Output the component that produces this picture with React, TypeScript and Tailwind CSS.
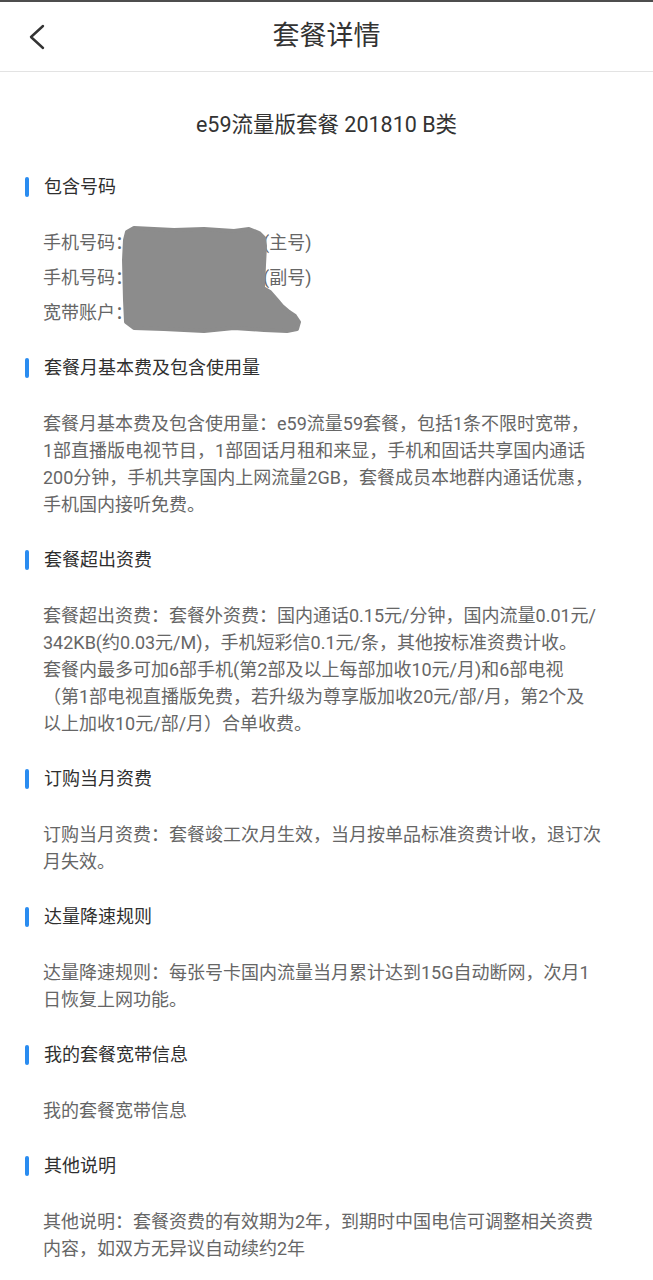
import React from "react";

const sections: { title: string; lines: string[] }[] = [
  {
    title: "套餐月基本费及包含使用量",
    lines: [
      "套餐月基本费及包含使用量：e59流量59套餐，包括1条不限时宽带，",
      "1部直播版电视节目，1部固话月租和来显，手机和固话共享国内通话",
      "200分钟，手机共享国内上网流量2GB，套餐成员本地群内通话优惠，",
      "手机国内接听免费。",
    ],
  },
  {
    title: "套餐超出资费",
    lines: [
      "套餐超出资费：套餐外资费：国内通话0.15元/分钟，国内流量0.01元/",
      "342KB(约0.03元/M)，手机短彩信0.1元/条，其他按标准资费计收。",
      "套餐内最多可加6部手机(第2部及以上每部加收10元/月)和6部电视",
      "（第1部电视直播版免费，若升级为尊享版加收20元/部/月，第2个及",
      "以上加收10元/部/月）合单收费。",
    ],
  },
  {
    title: "订购当月资费",
    lines: [
      "订购当月资费：套餐竣工次月生效，当月按单品标准资费计收，退订次",
      "月失效。",
    ],
  },
  {
    title: "达量降速规则",
    lines: [
      "达量降速规则：每张号卡国内流量当月累计达到15G自动断网，次月1",
      "日恢复上网功能。",
    ],
  },
  {
    title: "我的套餐宽带信息",
    lines: ["我的套餐宽带信息"],
  },
  {
    title: "其他说明",
    lines: [
      "其他说明：套餐资费的有效期为2年，到期时中国电信可调整相关资费",
      "内容，如双方无异议自动续约2年",
    ],
  },
];

function SectionTitle({ text }: { text: string }) {
  return (
    <div className="flex items-center h-[27px]">
      <span className="ml-[25px] w-[4px] h-[20px] rounded-full bg-[#2a8cf0]" />
      <span className="ml-[15px] text-[18px] leading-[27px] text-[#2f2f2f]">{text}</span>
    </div>
  );
}

export default function App() {
  return (
    <div
      className="w-[653px] min-h-[1280px] bg-white"
      style={{ fontFamily: 'Roboto, "Noto Sans CJK SC", sans-serif' }}
    >
      {/* Header */}
      <div className="border-t-2 border-[#4d4d4d]">
        <div className="relative h-[70px] flex items-center justify-center border-b border-[#e3e3e3]">
          <svg
            className="absolute left-[26px] top-[20px]"
            width="22"
            height="32"
            viewBox="0 0 22 32"
            fill="none"
          >
            <path d="M17 4 L5 15 L17 26" stroke="#333" strokeWidth="2.4" strokeLinecap="round" strokeLinejoin="round" />
          </svg>
          <span className="text-[27px] text-[#333] leading-none">套餐详情</span>
        </div>
      </div>

      {/* Plan name */}
      <div className="mt-[38px] text-center text-[21.5px] leading-[30px] text-[#333]">
        e59流量版套餐 201810 B类
      </div>

      {/* 包含号码 */}
      <div className="mt-[33px]">
        <SectionTitle text="包含号码" />
        <div className="relative mt-[25px] pl-[43px] text-[18px] leading-[35px] text-[#666]">
          <div className="whitespace-nowrap">
            手机号码：<span className="inline-block w-[130px]" />(主号)
          </div>
          <div className="whitespace-nowrap">
            手机号码：<span className="inline-block w-[130px]" />(副号)
          </div>
          <div className="whitespace-nowrap">宽带账户：</div>
          <svg
            className="absolute left-[122px] top-0"
            width="184"
            height="112"
            viewBox="0 0 184 112"
          >
            <path
              d="M5 7 L12 3 L52 5 L82 4 L112 6 L127 4 L137 8 L142 13 L143 21 L142 40 L141 63 L148 67 L155 75 L160 81 L167 87 L173 91 L177 97 L175 104 L165 106 L142 105 L112 103 L82 106 L42 104 L12 103 L4 97 L3 75 L2 35 L3 15 Z"
              fill="#8c8c8c"
              stroke="#8c8c8c"
              strokeWidth="4"
              strokeLinejoin="round"
            />
          </svg>
        </div>
      </div>

      {sections.map((s, idx) => (
        <div key={s.title} className={idx === 0 ? "mt-[24px]" : "mt-[28px]"}>
          <SectionTitle text={s.title} />
          <div className="mt-[29px] pl-[43px] text-[18px] leading-[27px] text-[#666]">
            {s.lines.map((l, i) => (
              <div key={i} className="whitespace-nowrap">
                {l}
              </div>
            ))}
          </div>
        </div>
      ))}
    </div>
  );
}
